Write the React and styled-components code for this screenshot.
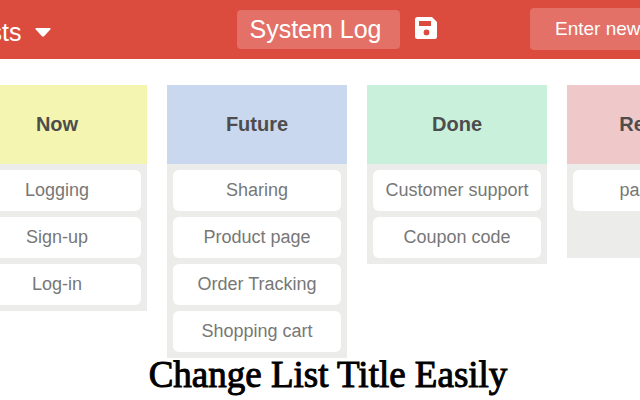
import React from "react";
import styled, { createGlobalStyle } from "styled-components";

const GlobalStyle = createGlobalStyle`
  * { box-sizing: border-box; }
  body {
    margin: 0;
    background: #fff;
    font-family: "Liberation Sans", Arial, sans-serif;
  }
  button, input { font-family: inherit; }
`;

const Page = styled.div`
  min-height: 100vh;
  overflow: hidden;
`;

const Header = styled.header`
  display: flex;
  justify-content: space-between;
  align-items: center;
  height: 59px;
  background: #db4c3f;
  color: #fff;
`;

const HeaderSide = styled.div`
  flex: 1 1 0;
  min-width: 0;
  display: flex;
  justify-content: ${(p) => (p.$end ? "flex-end" : "flex-start")};
`;

const ListsButton = styled.button`
  display: flex;
  align-items: center;
  gap: 14px;
  margin: 5px 0 0 -30px;
  padding: 0;
  border: 0;
  background: none;
  color: inherit;
  font-size: 25px;
  line-height: 30px;
`;

const TitleGroup = styled.form`
  display: flex;
  align-items: center;
  gap: 15px;
  margin-left: 33px;
`;

const TitleInput = styled.input`
  width: 163px;
  height: 39px;
  padding: 0 13px;
  border: 0;
  border-radius: 4px;
  background: #e37167;
  color: #fff;
  font-size: 25px;
`;

const SaveButton = styled.button`
  display: flex;
  margin-bottom: 4px;
  padding: 0;
  border: 0;
  background: none;
  color: inherit;
`;

const NewInput = styled.input`
  flex: none;
  width: 210px;
  height: 42px;
  margin: 0 -100px 2px 0;
  padding: 0 25px;
  border: 0;
  border-radius: 4px;
  background: #e37167;
  color: #fff;
  font-size: 19px;
  &::placeholder { color: #fff; opacity: 1; }
`;

const Board = styled.main`
  display: flex;
  align-items: flex-start;
  gap: 20px;
  margin-left: -33px;
  padding-top: 26px;
`;

const Column = styled.section`
  flex: none;
  width: 180px;
  background: #ececea;
`;

const ColumnTitle = styled.h2`
  margin: 0;
  padding: 24px 0 25px;
  background: ${(p) => p.$color};
  color: #4d4d4d;
  font-size: 20px;
  line-height: 30px;
  text-align: center;
`;

const Cards = styled.ul`
  display: flex;
  flex-direction: column;
  gap: 6px;
  min-height: 94px;
  margin: 0;
  padding: 6px;
  list-style: none;
`;

const Card = styled.li`
  padding: 10px 0;
  border-radius: 6px;
  background: #fff;
  color: #777;
  font-size: 18px;
  line-height: 21px;
  text-align: center;
  white-space: nowrap;
`;

const Caption = styled.p`
  margin: 0;
  padding-left: 16px;
  color: #000;
  font-family: Georgia, "Liberation Serif", serif;
  font-size: 37px;
  line-height: 34px;
  text-align: center;
  -webkit-text-stroke: 1px #000;
`;

const columns = [
  { title: "Now", color: "#f4f5b0", cards: ["Logging", "Sign-up", "Log-in"] },
  {
    title: "Future",
    color: "#c9d8ef",
    cards: ["Sharing", "Product page", "Order Tracking", "Shopping cart"],
  },
  { title: "Done", color: "#c9f0db", cards: ["Customer support", "Coupon code"] },
  { title: "Release", color: "#efc9c9", cards: ["passkeys"] },
];

const CaretIcon = () => (
  <svg width="16" height="9" viewBox="0 0 16 9" fill="currentColor" aria-hidden="true">
    <path d="M1 0H15Q16 .5 15.3 1.4L9 8.3Q8 9 7 8.3L.7 1.4Q0 .5 1 0Z" />
  </svg>
);

const SaveIcon = () => (
  <svg width="22" height="22" viewBox="0 0 22 22" fill="currentColor" aria-hidden="true">
    <path
      fillRule="evenodd"
      d="M2.5 0H17L22 5V19.5Q22 22 19.5 22H2.5Q0 22 0 19.5V2.5Q0 0 2.5 0ZM4 4V9H16V4ZM11.5 12.5A2.9 2.9 0 1 0 11.5 18.3A2.9 2.9 0 1 0 11.5 12.5Z"
    />
  </svg>
);

export default function App() {
  return (
    <Page>
      <GlobalStyle />
      <Header>
        <HeaderSide>
          <ListsButton type="button">
            Lists <CaretIcon />
          </ListsButton>
        </HeaderSide>
        <TitleGroup>
          <TitleInput aria-label="Title" defaultValue="System Log" />
          <SaveButton type="button" aria-label="Save">
            <SaveIcon />
          </SaveButton>
        </TitleGroup>
        <HeaderSide $end>
          <NewInput aria-label="New item" placeholder="Enter new item" />
        </HeaderSide>
      </Header>
      <Board>
        {columns.map((column) => (
          <Column key={column.title}>
            <ColumnTitle $color={column.color}>{column.title}</ColumnTitle>
            <Cards>
              {column.cards.map((card) => (
                <Card key={card}>{card}</Card>
              ))}
            </Cards>
          </Column>
        ))}
      </Board>
      <Caption>Change List Title Easily</Caption>
    </Page>
  );
}
